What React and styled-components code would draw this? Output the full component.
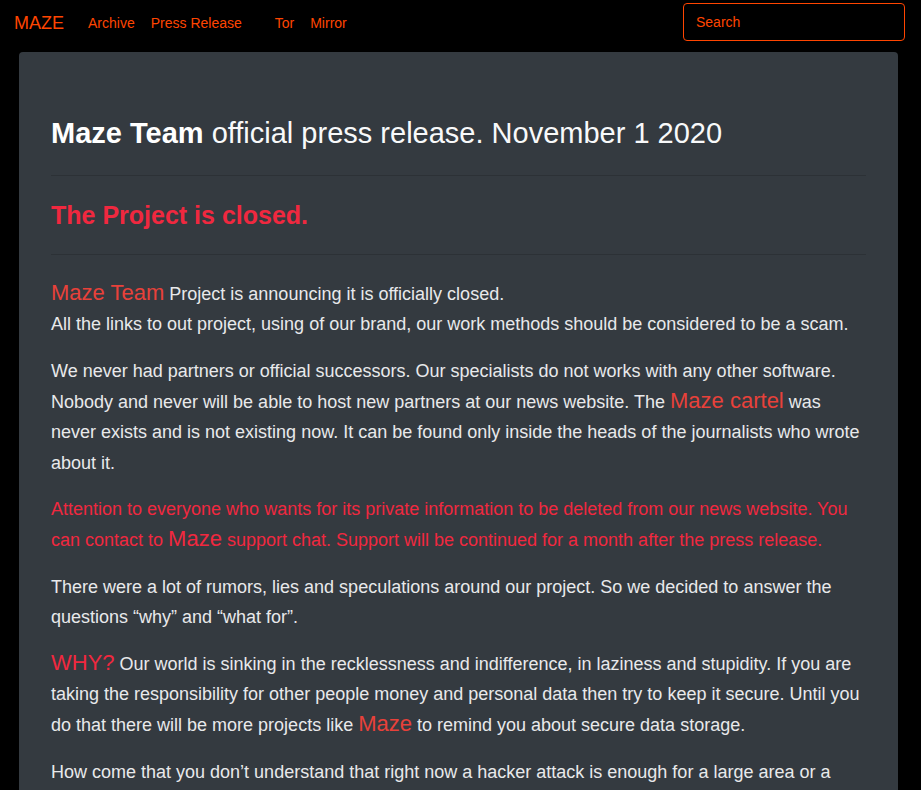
import styled, { createGlobalStyle } from 'styled-components';

const GlobalStyle = createGlobalStyle`
    html, body {
        margin: 0;
        padding: 0;
        background-color: #000;
        font-family: 'Liberation Sans', Arial, sans-serif;
    }
`;

const Page = styled.div`
    min-height: 790px;
    background-color: #000;
`;

const Navbar = styled.nav`
    display: flex;
    align-items: center;
    height: 44px;
    padding: 0 16px 0 14px;
    .brand {
        font-size: 18px;
        color: #ff4500;
        text-decoration: none;
        margin-right: 16px;
        padding-top: 2px;
    }
    .links {
        display: flex;
        align-items: center;
        flex: 1;
        padding-top: 2px;
    }
`;

const NavLink = styled.a`
    font-size: 14px;
    color: #ff4500;
    text-decoration: none;
    padding: 0 8px;
    margin-left: ${(p) => (p.$spaced ? '17px' : '0')};
`;

const Search = styled.input`
    box-sizing: border-box;
    width: 222px;
    height: 38px;
    padding: 0 12px;
    background-color: #000;
    border: 1px solid #ff4500;
    border-radius: 4px;
    color: #ff4500;
    font-family: 'Liberation Sans', Arial, sans-serif;
    font-size: 14px;
    outline: none;
    &::placeholder {
        color: #ff4500;
        opacity: 1;
    }
`;

const Container = styled.main`
    padding: 8px 23px 0 19px;
`;

const Card = styled.article`
    background-color: #343a40;
    border-radius: 4px;
    padding: 64px 32px 20px;
    color: #e8e9eb;
`;

const Title = styled.h1`
    margin: 0;
    font-size: 29px;
    font-weight: 400;
    line-height: 1.2;
    color: #f8f9fa;
    b {
        font-weight: 700;
        color: #fff;
    }
`;

const Rule = styled.hr`
    margin: 24px 0;
    border: 0;
    border-top: 1px solid rgba(0, 0, 0, 0.15);
`;

const Closed = styled.h2`
    margin: 0;
    font-size: 25px;
    font-weight: 700;
    line-height: 1.2;
    color: #f0283f;
`;

const Para = styled.p`
    margin: 0 0 16px;
    font-size: 18px;
    line-height: 30.6px;
    color: ${(p) => (p.$alert ? '#f0283f' : '#e8e9eb')};
`;

const Accent = styled.span`
    font-size: 22px;
    line-height: 1;
    color: ${(p) => (p.$tone === 'crimson' ? '#f0283f' : '#e8413a')};
`;

export default function App() {
    return (
        <Page>
            <GlobalStyle />
            <Navbar>
                <a className="brand" href="#">MAZE</a>
                <div className="links">
                    <NavLink href="#">Archive</NavLink>
                    <NavLink href="#">Press Release</NavLink>
                    <NavLink href="#" $spaced>Tor</NavLink>
                    <NavLink href="#">Mirror</NavLink>
                </div>
                <Search placeholder="Search" />
            </Navbar>
            <Container>
                <Card>
                    <Title>
                        <b>Maze Team</b> official press release. November 1 2020
                    </Title>
                    <Rule />
                    <Closed>The Project is closed.</Closed>
                    <Rule />
                    <Para>
                        <Accent>Maze Team</Accent> Project is announcing it is officially closed.
                        <br />
                        All the links to out project, using of our brand, our work methods should be considered to be a scam.
                    </Para>
                    <Para>
                        We never had partners or official successors. Our specialists do not works with any other software.
                        Nobody and never will be able to host new partners at our news website. The{' '}
                        <Accent>Maze cartel</Accent> was never exists and is not existing now. It can be found only
                        inside the heads of the journalists who wrote about it.
                    </Para>
                    <Para $alert>
                        Attention to everyone who wants for its private information to be deleted from our news website.
                        You can contact to <Accent $tone="crimson">Maze</Accent> support chat. Support will be continued
                        for a month after the press release.
                    </Para>
                    <Para>
                        There were a lot of rumors, lies and speculations around our project. So we decided to answer the
                        questions “why” and “what for”.
                    </Para>
                    <Para>
                        <Accent $tone="crimson">WHY?</Accent> Our world is sinking in the recklessness and indifference, in
                        laziness and stupidity. If you are taking the responsibility for other people money and personal
                        data then try to keep it secure. Until you do that there will be more projects like{' '}
                        <Accent>Maze</Accent> to remind you about secure data storage.
                    </Para>
                    <Para>
                        How come that you don’t understand that right now a hacker attack is enough for a large area or a
                        whole country to be left without electricity, water or communication.
                    </Para>
                </Card>
            </Container>
        </Page>
    );
}
